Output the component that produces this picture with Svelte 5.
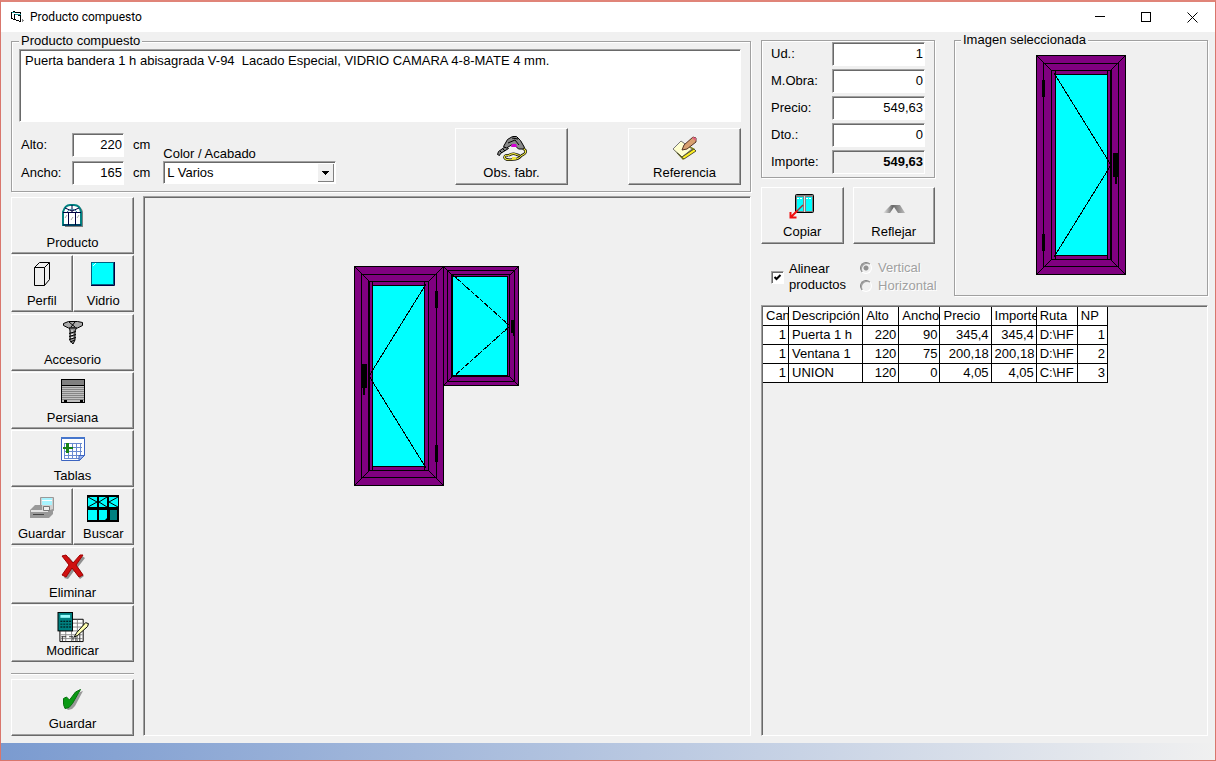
<script>
  let descripcion = $state(
    "Puerta bandera 1 h abisagrada V-94  Lacado Especial, VIDRIO CAMARA 4-8-MATE 4 mm."
  );
  let alto = $state("220");
  let ancho = $state("165");
  let acabado = $state("L Varios");
  let alinear = $state(true);
  let orientacion = $state("vertical");

  let importes = $state([
    { id: "ud", label: "Ud.:", value: "1" },
    { id: "obra", label: "M.Obra:", value: "0" },
    { id: "precio", label: "Precio:", value: "549,63" },
    { id: "dto", label: "Dto.:", value: "0" },
    { id: "importe", label: "Importe:", value: "549,63", total: true },
  ]);

  // grupos de botones de la barra lateral
  const barra = [
    ["Producto"],
    ["Perfil", "Vidrio"],
    ["Accesorio"],
    ["Persiana"],
    ["Tablas"],
    ["Guardar", "Buscar"],
    ["Eliminar"],
    ["Modificar"],
  ];

  const columnas = [
    { titulo: "Can", ancho: 26, num: true },
    { titulo: "Descripción", ancho: 74 },
    { titulo: "Alto", ancho: 36, num: true },
    { titulo: "Ancho", ancho: 41, num: true },
    { titulo: "Precio", ancho: 51, num: true },
    { titulo: "Importe", ancho: 45, num: true },
    { titulo: "Ruta", ancho: 41 },
    { titulo: "NP", ancho: 30, num: true },
  ];

  const filas = [
    ["1", "Puerta 1 h", "220", "90", "345,4", "345,4", "D:\\HF", "1"],
    ["1", "Ventana 1", "120", "75", "200,18", "200,18", "D:\\HF", "2"],
    ["1", "UNION", "120", "0", "4,05", "4,05", "C:\\HF", "3"],
  ];
</script>

{#snippet puerta()}
  <g fill="#800080" stroke="#000">
    <rect x="0.5" y="0.5" width="89" height="219" />
    <rect x="7.5" y="8.5" width="75" height="203" />
    <rect x="15.5" y="15.5" width="59" height="189" />
    <path d="M0 0L16 16M90 0L74 16M0 220L16 204M90 220L74 204" />
    <path d="M19.5 15V205M71.5 15V205M75.5 15V205" fill="none" />
    <rect x="19.5" y="19.5" width="52" height="181" fill="#0ff" />
    <path d="M18 18L75 110L18 202" fill="none" />
  </g>
  <path d="M6 25h3v17h-3zM6 179h3v17h-3zM77 98h5v24h-1v7h-2v-7h-2z" />
{/snippet}

{#snippet ventana()}
  <g fill="#800080" stroke="#000">
    <rect x="0.5" y="0.5" width="75" height="119" />
    <rect x="4.5" y="4.5" width="67" height="111" />
    <rect x="8.5" y="8.5" width="58" height="102" />
    <path d="M0 0L10 10M76 0L66 10M0 120L10 110M76 120L66 110" />
    <rect x="9.5" y="10.5" width="55" height="99" fill="#0ff" />
    <path d="M10 9L67 60L10 111" fill="none" stroke-dasharray="5 1" />
  </g>
  <path d="M68 54h4v13h-1v3h-1v-3h-2z" />
{/snippet}

{#snippet icono(nombre)}
  {#if nombre === "Producto"}
    <svg class="icono" width="22" height="24" viewBox="0 0 22 24">
      <path d="M3 23V8Q4 2 9 2H15Q20 3 21 8V23Z" fill="#808080" />
      <path d="M1 21V8Q3 1 8 1H12Q18 1 19 8V21Z" fill="#fff" stroke="#008080" stroke-width="2" />
      <path d="M1 8.5H19M1 21H19M6.5 8V21M13.5 8V21M10 8V1M10 7L3 4M10 7L17 4" stroke="#000040" fill="none" />
      <path d="M5 8Q10 2 15 8" stroke="#3c84a0" fill="none" />
      <path d="M3 14l2-3M9 16l2-3M15 14l2-3" stroke="#aaa" />
    </svg>
  {:else if nombre === "Perfil"}
    <svg class="icono" width="16" height="24" viewBox="0 0 16 24">
      <path d="M0.5 5.5h10v18h-10zM0.5 5.5l5-5h10l-5 5M15.5 0.5v17l-5 6" fill="none" stroke="#000" />
    </svg>
  {:else if nombre === "Vidrio"}
    <svg class="icono" width="24" height="24" viewBox="0 0 24 24">
      <rect x="0.5" y="0.5" width="22" height="22" fill="#0ff" stroke="#006080" />
      <path d="M2 4l3-3" stroke="#dff" />
      <path d="M0 23.5H23.5V0" fill="none" stroke="#000040" />
    </svg>
  {:else if nombre === "Accesorio"}
    <svg class="icono" width="20" height="24" viewBox="0 0 20 24">
      <path d="M0.5 2.5l5-2h9l5 1v3l-5 2.500h-9l-5-2.500z" fill="#aaa" stroke="#000" />
      <path d="M6 1l6 5M12 1l-4 5" stroke="#000" />
      <path d="M6.500 7h7l-1.500 3v9l-2 4l-3-3.500V10z" fill="#999" stroke="#000" />
      <path d="M6 12.500l7-2M6 15.500l7-2M6 18.500l7-2M7 21l5-2" stroke="#000" />
      <path d="M8 10h2M8 13.500h2M8 16.500h2" stroke="#eee" />
    </svg>
  {:else if nombre === "Persiana"}
    <svg class="icono" width="24" height="24" viewBox="0 0 24 24">
      <rect x="0.5" y="0.5" width="23" height="23" fill="#c0c0c0" stroke="#000" />
      <rect x="1" y="1" width="22" height="5" fill="#808080" />
      <path d="M0 6.5H24" stroke="#000" />
      <path d="M1 8.5H23M1 10.5H23M1 12.5H23M1 14.5H23M1 16.5H23M1 18.5H23M1 20.5H23" stroke="#858585" />
      <path d="M3 21h3v2H3zM19 21h3v2h-3z" />
    </svg>
  {:else if nombre === "Tablas"}
    <svg class="icono" width="24" height="24" viewBox="0 0 24 24">
      <path d="M0.5 0.5h23v18l-5 5h-18z" fill="#fff" stroke="#3c64c0" />
      <path d="M0 0h24v2H0z" fill="#4676cc" />
      <path d="M3.5 6V21M7.5 6V21M11.5 6V21M15.5 6V21M19.5 6V19M3 6.5H21M3 10.5H21M3 14.5H21M3 18.5H20M3 21.5H18" stroke="#6a8ad0" />
      <path d="M18 23.5v-5h5.5z" fill="#a0b8f0" stroke="#3c64c0" />
      <path d="M5 6h3v4h4v2H8v4H5v-4H2v-2h3z" fill="#168016" />
    </svg>
  {:else if nombre === "Guardar"}
    <svg class="icono" width="24" height="24" viewBox="0 0 24 24">
      <path d="M10.5 2.5h13v13h-13z" fill="#d0d0d0" stroke="#999" />
      <path d="M12 3h10v7H12z" fill="#a8f4ff" />
      <path d="M12 5.5h10" stroke="#fff" />
      <path d="M0 15l5-5h7v5h8l3-1v5l-4 4H0z" fill="#999" />
      <path d="M1 15h17v2H1z" fill="#e4e4e4" />
      <path d="M3 19.5h11" stroke="#444" />
      <path d="M13.5 11.5h6v4h-6z" fill="#eee" stroke="#777" />
    </svg>
  {:else if nombre === "Buscar"}
    <svg class="icono" width="32" height="27" viewBox="0 0 32 27">
      <rect width="32" height="27" />
      <path d="M1 2h9v10H1zM12 2h8v10h-8zM22 2h9v10h-9zM1 15h9v10H1zM12 15h8v8l-2 2h-6z" fill="#0ff" />
      <path d="M23 15h7v10h-7z" fill="#008080" />
      <path d="M1 2l9 5l-9 5M20 2l-8 5l8 5M31 2l-9 5l9 5" fill="none" stroke="#000" />
    </svg>
  {:else if nombre === "Eliminar"}
    <svg class="icono" width="26" height="26" viewBox="0 0 26 26">
      <path d="M4 4l5-1l6 7l7-8l3 2l-7 9l6 9l-4 3l-6-8l-6 8l-4-1l7-11z" fill="#909090" />
      <path d="M2 2l4-1l7 8l7-8h3l-7 10l7 10l-4 2l-7-9l-6 9l-4-2l7-10z" fill="#d01010" stroke="#a00000" />
    </svg>
  {:else if nombre === "Modificar"}
    <svg class="icono" width="32" height="32" viewBox="0 0 32 32">
      <path d="M2.5 7.5h24v23h-24z" fill="#fff" stroke="#000" />
      <path d="M3 11.5h23M3 15.5h23M3 19.5h23M3 23.5h23M3 27.5h23M8.5 8v22M14.5 8v22M20.5 8v22" stroke="#888" />
      <path d="M4 25.500h5M5 25v5M12 25.500h4v4M19 24v6M23 23v7" stroke="#333" fill="none" />
      <rect x="0.5" y="0.5" width="15" height="19" fill="#008080" stroke="#000" />
      <path d="M3 3h10v3H3z" fill="#9ff" />
      <path d="M3 9h2v1H3zM6 9h2v1H6zM9 9h2v1H9zM12 9h2v1h-2zM3 12h2v1H3zM6 12h2v1H6zM9 12h2v1H9zM12 12h2v1h-2zM3 15h2v1H3zM6 15h2v1H6zM9 15h2v1H9zM12 15h2v1h-2z" />
      <path d="M17 26l3-5l9-10l3 1l-1 3l-10 9z" fill="#ffffb0" stroke="#000" />
    </svg>
  {/if}
{/snippet}

<div class="ventana">
  <header>
    <svg width="13" height="12" viewBox="0 0 13 12">
      <path d="M0.500 1.500l3-1l1 1h5v7H4l-3.500-1z" fill="#fff" stroke="#000" />
      <path d="M3.500 3.500l6 1v6l-6-2z" fill="#fff" stroke="#000" />
      <path d="M1 1.500h3M4 3h6" stroke="#20a0a0" />
      <path d="M11 8l2 2l-2 1z" fill="#888" />
    </svg>
    <h1>Producto compuesto</h1>
    <div class="controles">
      <button aria-label="Minimizar">
        <svg width="10" height="10"><path d="M0 4.500h10" stroke="#000" /></svg>
      </button>
      <button aria-label="Maximizar">
        <svg width="10" height="10"><path d="M0.500 0.500h9v9h-9z" fill="none" stroke="#000" /></svg>
      </button>
      <button aria-label="Cerrar">
        <svg class="suave" width="11" height="11"><path d="M0.500 0.500l10 10M10.500 0.500l-10 10" stroke="#000" /></svg>
      </button>
    </div>
  </header>

  <main>
    <div class="izquierda">
      <fieldset class="producto">
        <legend>Producto compuesto</legend>
        <textarea aria-label="Descripción" bind:value={descripcion}></textarea>
        <div class="datos">
          <div class="medidas">
            <label for="alto">Alto:</label>
            <input id="alto" bind:value={alto} />
            <span>cm</span>
            <label for="ancho">Ancho:</label>
            <input id="ancho" bind:value={ancho} />
            <span>cm</span>
          </div>
          <div class="color">
            <label for="color">Color / Acabado</label>
            <div class="combo">
              <select id="color" bind:value={acabado}>
                <option>L Varios</option>
              </select>
              <svg width="17" height="19" viewBox="0 0 17 19">
                <path d="M5 8h7l-3.500 4z" />
              </svg>
            </div>
          </div>
          <div class="acciones">
            <button class="boton">
              <svg class="icono" width="30" height="26" viewBox="0 0 30 26">
                <path d="M11.500 20.500q-4-1-4 2q1 3 8 2q6 0 9-4q5-2 4-5l-3-3M11.500 20.500q4-3 8-1l3 1" fill="none" stroke="#000" stroke-width="2.500" />
                <path d="M11.500 20.500q-4-1-4 2q1 3 8 2q6 0 9-4q5-2 4-5l-3-3M11.500 20.500q4-3 8-1l3 1" fill="none" stroke="#f0e840" stroke-width="1.200" />
                <path d="M15 22h4v2h-4z" fill="#f0e840" />
                <path d="M0.500 19.500l1-3l7-5l3 2l-8 5l-1 2z" fill="#888" stroke="#000" />
                <path d="M6.500 11.500l4-7l5-3h4l4 4l4 7l-2 1.500l-4 0l-4-4h-3l-5 3z" fill="#888" stroke="#000" />
                <path d="M11 8l7-3l4 5M15 3l6 1M3 16l2 2M6 14l2 2" stroke="#000" fill="none" />
                <path d="M15 9h4l1 3h-6z" fill="#d000d0" />
              </svg>
              Obs. fabr.
            </button>
            <button class="boton">
              <svg class="icono" width="26" height="26" viewBox="0 0 26 26">
                <path d="M1 14l9-7l13 7l-12 11z" fill="#808000" />
                <path d="M1 14l8-8l11 8l-10 8z" fill="#ffffd0" stroke="#777" />
                <path d="M5 18l5 4l12-8l2 2l-12 8z" fill="#ffef20" stroke="#553" />
                <path d="M10 15l2-5l9-8l3 1v4l-9 7z" fill="#d8a070" stroke="#532" />
                <path d="M21 2l3 1v3l-4-3z" fill="#e06080" />
              </svg>
              Referencia
            </button>
          </div>
        </div>
      </fieldset>

      <div class="trabajo">
        <nav>
          <div class="barra">
            {#each barra as grupo}
              <div class="grupo">
                {#each grupo as nombre}
                  <button class="boton">{@render icono(nombre)}{nombre}</button>
                {/each}
              </div>
            {/each}
          </div>
          <hr />
          <button class="boton">
            <svg class="icono" width="22" height="24" viewBox="0 0 22 24">
              <path d="M4 13l5 3l9-10l3-1l-8 15l-3 3l-4 1l-2-2z" fill="#999" />
              <path d="M1.500 12.500l3-1.500l3 3l6-8l5-2.500l-8 14l-3.500 4l-4 1l-1.500-4z" fill="#0a9a14" stroke="#087010" />
            </svg>
            Guardar
          </button>
        </nav>
        <div class="lienzo">
          <svg width="165" height="220" viewBox="0 0 165 220">
            <g transform="translate(90 0) scale(-1 1)">{@render puerta()}</g>
            <g transform="translate(89 0)">{@render ventana()}</g>
          </svg>
        </div>
      </div>
    </div>

    <div class="derecha">
      <div class="resumen">
        <div class="precios">
          <fieldset class="importes">
            {#each importes as campo}
              <label for={campo.id}>{campo.label}</label>
              <input
                id={campo.id}
                class:total={campo.total}
                readonly={campo.total}
                bind:value={campo.value}
              />
            {/each}
          </fieldset>
          <div class="copias">
            <button class="boton">
              <svg class="icono" width="26" height="26" viewBox="0 0 26 26">
                <rect x="6.5" y="0.5" width="18" height="18" rx="1" fill="#808080" stroke="#000" />
                <path d="M8 3h6v14H8zM17 3h6v14h-6z" fill="#0ff" />
                <path d="M15.5 2v16" stroke="#ddd" />
                <path d="M8 4.500h6M17 4.500h6" stroke="#fff" stroke-dasharray="2 1" />
                <path d="M14 11l-7 7" stroke="#a03030" stroke-width="1.500" />
                <path d="M8 17l-6 6M1.500 18v5.500h6" fill="none" stroke="#f01010" stroke-width="2" />
              </svg>
              Copiar
            </button>
            <button class="boton">
              <svg class="icono" width="24" height="26" viewBox="0 0 24 26">
                <defs>
                  <linearGradient id="metal">
                    <stop offset="0" stop-color="#eee" />
                    <stop offset="0.45" stop-color="#666" />
                    <stop offset="1" stop-color="#bbb" />
                  </linearGradient>
                </defs>
                <path d="M1 19l8-8h9l5 8h-7l-4-6l-4 6z" fill="url(#metal)" />
              </svg>
              Reflejar
            </button>
          </div>
          <div class="opciones">
            <label class="alinear">
              <input type="checkbox" bind:checked={alinear} />
              <span>Alinear productos</span>
            </label>
            <div class="sentido">
              <label>
                <input type="radio" value="vertical" bind:group={orientacion} disabled />
                Vertical
              </label>
              <label>
                <input type="radio" value="horizontal" bind:group={orientacion} disabled />
                Horizontal
              </label>
            </div>
          </div>
        </div>

        <fieldset class="imagen">
          <legend>Imagen seleccionada</legend>
          <svg width="90" height="220" viewBox="0 0 90 220">{@render puerta()}</svg>
        </fieldset>
      </div>

      <div class="rejilla">
        <table>
          <colgroup>
            {#each columnas as col}
              <col style:width="{col.ancho}px" />
            {/each}
          </colgroup>
          <thead>
            <tr>
              {#each columnas as col}
                <th>{col.titulo}</th>
              {/each}
            </tr>
          </thead>
          <tbody>
            {#each filas as fila}
              <tr>
                {#each fila as celda, i}
                  <td class:num={columnas[i].num}>{celda}</td>
                {/each}
              </tr>
            {/each}
          </tbody>
        </table>
      </div>
    </div>
  </main>

  <footer></footer>
</div>

<style>
  .ventana {
    box-sizing: border-box;
    min-height: 100vh;
    display: flex;
    flex-direction: column;
    background: #f0f0f0;
    border: 1px solid #d9766c;
    border-top: 2px solid #e08478;
    font-family: "Liberation Sans", Arial, sans-serif;
    font-size: 13px;
    line-height: 16px;
    color: #000;
  }

  .ventana * {
    box-sizing: border-box;
  }

  svg {
    display: block;
    shape-rendering: crispEdges;
  }

  .icono,
  .suave {
    shape-rendering: auto;
  }

  button,
  input,
  select,
  textarea {
    font: inherit;
    color: inherit;
    margin: 0;
    border-radius: 0;
    outline: none;
  }

  header {
    display: flex;
    align-items: center;
    gap: 6px;
    height: 30px;
    padding-left: 10px;
    background: #fff;
  }

  h1 {
    flex: 1;
    margin: 0;
    font: 12px Roboto, "Open Sans", sans-serif;
  }

  .controles {
    display: flex;
  }

  .controles button {
    display: flex;
    align-items: center;
    justify-content: center;
    width: 46px;
    height: 30px;
    padding: 0;
    border: none;
    background: none;
  }

  main {
    flex: 1;
    display: grid;
    grid-template-columns: minmax(0, 1fr) 447px;
    gap: 10px;
    padding: 0 7px 7px 10px;
  }

  .izquierda,
  .derecha {
    display: flex;
    flex-direction: column;
  }

  fieldset {
    min-width: 0;
    margin: 0;
    border: 1px solid #a0a0a0;
    box-shadow:
      1px 1px #fff,
      inset 1px 1px #fff;
  }

  legend {
    padding: 0 2px;
    background: #f0f0f0;
  }

  textarea,
  input,
  .combo,
  .lienzo,
  .rejilla {
    border: 1px solid;
    border-color: #a0a0a0 #fff #fff #a0a0a0;
    box-shadow: inset 1px 1px #696969;
    background: #fff;
  }

  .producto {
    margin-top: 1px;
    height: 159px;
    padding: 0 9px 0 7px;
  }

  textarea {
    display: block;
    width: 100%;
    height: 73px;
    padding: 3px 5px;
    resize: none;
    overflow: hidden;
  }

  .datos {
    display: flex;
    align-items: flex-start;
    padding-top: 6px;
  }

  .medidas {
    display: grid;
    grid-template-columns: 53px 52px auto;
    row-gap: 4px;
    align-items: center;
    padding-top: 5px;
  }

  .medidas label {
    padding-left: 2px;
  }

  .medidas span {
    padding-left: 9px;
  }

  .medidas input,
  .importes input {
    min-width: 0;
    width: 100%;
    height: 24px;
    padding: 0 1px 2px;
    text-align: right;
  }

  .color {
    width: 173px;
    margin: 19px 0 0 13px;
  }

  .color label {
    display: block;
    line-height: 14px;
  }

  .combo {
    display: grid;
    grid-template-columns: minmax(0, 1fr) 17px;
    height: 23px;
    padding: 1px;
  }

  .combo select {
    grid-area: 1 / 1 / 2 / 3;
    appearance: none;
    width: 100%;
    padding: 0 2px;
    border: none;
    background: none;
  }

  .combo svg {
    grid-area: 1 / 2 / 2 / 3;
    pointer-events: none;
    background: #f0f0f0;
    box-shadow:
      inset 1px 1px #fff,
      inset -1px -1px #808080;
  }

  .acciones {
    display: flex;
    gap: 60px;
    margin-left: auto;
  }

  .acciones .boton {
    width: 113px;
  }

  .boton {
    display: flex;
    flex-direction: column;
    align-items: center;
    justify-content: space-between;
    height: 57px;
    padding: 6px 0 3px;
    background: #f0f0f0;
    border: 1px solid;
    border-color: #fff #696969 #696969 #fff;
    box-shadow: inset -1px -1px #a0a0a0;
  }

  .trabajo {
    flex: 1;
    display: flex;
    gap: 9px;
    padding-top: 4px;
  }

  nav {
    display: flex;
    flex-direction: column;
    width: 123px;
    padding-top: 1px;
  }

  nav > .boton {
    width: 100%;
  }

  .barra {
    flex: 1;
    display: flex;
    flex-direction: column;
    justify-content: space-between;
  }

  .grupo {
    display: flex;
  }

  .grupo .boton {
    flex: 1;
    padding-bottom: 2px;
  }

  hr {
    width: 100%;
    margin: 11px 0 4px;
    border: none;
    border-top: 1px solid #a0a0a0;
    border-bottom: 1px solid #fff;
  }

  .lienzo {
    flex: 1;
    display: flex;
    align-items: flex-start;
    justify-content: center;
    padding: 69px 22px 0 0;
    background: #f0f0f0;
  }

  .resumen {
    display: flex;
    gap: 19px;
  }

  .precios {
    width: 174px;
    padding-top: 8px;
  }

  .importes {
    display: grid;
    grid-template-columns: 61px 1fr;
    row-gap: 3px;
    align-items: center;
    padding: 1px 9px 3px;
  }

  .importes .total {
    background: #f0f0f0;
    font-weight: bold;
  }

  .copias {
    display: flex;
    gap: 9px;
    padding-top: 9px;
  }

  .copias .boton {
    flex: 1;
  }

  .opciones {
    display: flex;
    gap: 14px;
    padding: 15px 0 0 10px;
    white-space: nowrap;
  }

  .alinear {
    display: flex;
    align-items: center;
    gap: 5px;
    width: 79px;
    white-space: normal;
  }

  input[type="checkbox"] {
    appearance: none;
    flex: none;
    width: 13px;
    height: 13px;
  }

  input[type="checkbox"]:checked {
    background: #fff
      url("data:image/svg+xml,%3Csvg xmlns='http://www.w3.org/2000/svg' width='11' height='11'%3E%3Cpath d='M2.500 5l2 2l4-4' fill='none' stroke='black' stroke-width='2'/%3E%3C/svg%3E")
      center no-repeat;
  }

  .sentido label {
    display: flex;
    align-items: center;
    gap: 6px;
    height: 18px;
    color: #a0a0a0;
    text-shadow: 1px 1px #fff;
  }

  input[type="radio"] {
    appearance: none;
    flex: none;
    width: 12px;
    height: 12px;
    border-radius: 50%;
    border-color: #808080 #fff #fff #808080;
    background: #f0f0f0;
    box-shadow: inset 1px 1px #a0a0a0;
  }

  input[type="radio"]:checked {
    background: radial-gradient(circle, #909090 2px, #f0f0f0 3px);
  }

  .imagen {
    flex: 1;
    display: flex;
    flex-direction: column;
    align-items: center;
    height: 264px;
    padding: 0 6px;
  }

  .imagen svg {
    margin-top: 7px;
  }

  .rejilla {
    flex: 1;
    margin-top: 9px;
    padding: 1px;
    background: #f0f0f0;
  }

  table {
    width: 345px;
    table-layout: fixed;
    border-collapse: separate;
    border-spacing: 0;
    background: #fff;
  }

  th,
  td {
    height: 19px;
    padding: 0 2px 0 3px;
    border-right: 1px solid #000;
    border-bottom: 1px solid #000;
    font-weight: normal;
    text-align: left;
    white-space: nowrap;
    overflow: hidden;
  }

  .num {
    text-align: right;
  }

  footer {
    height: 17px;
    background: linear-gradient(to right, #7b9bd0, #f0f0f0);
  }
</style>
